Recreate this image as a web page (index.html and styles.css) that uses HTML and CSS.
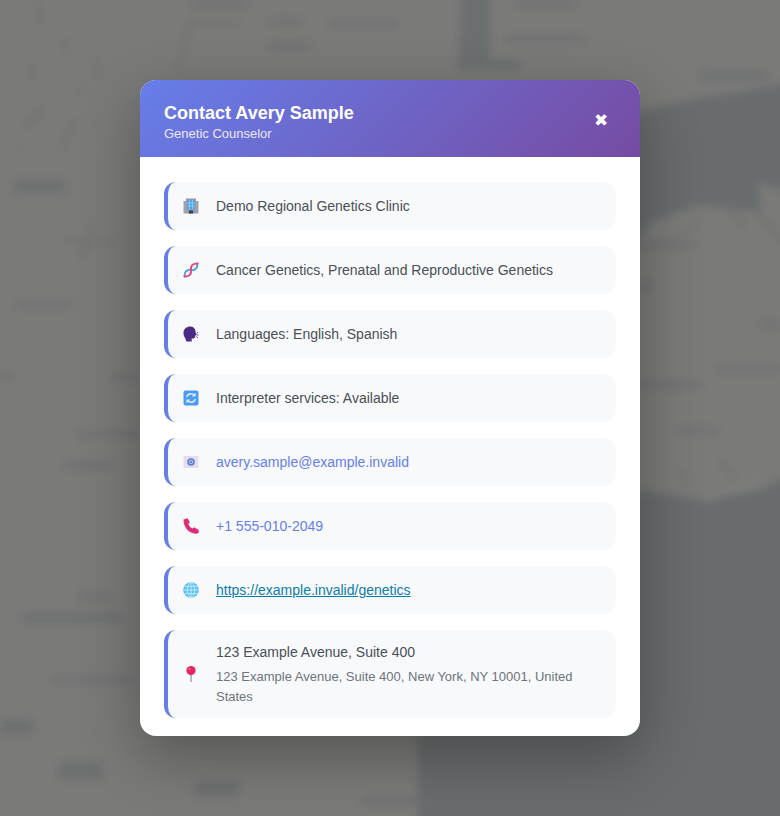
FILE: index.html
```html
<!DOCTYPE html>
<html lang="en">
<head>
  <meta charset="UTF-8">
  <title>Contact Avery Sample</title>
  <link rel="stylesheet" href="styles.css">
</head>
<body>
  <svg class="map" viewBox="0 0 780 816" preserveAspectRatio="none" aria-hidden="true">
    <g class="map-blur">
      <rect x="-20" y="-20" width="820" height="856" fill="#7a7a78"/>
      <!-- water -->
      <path d="M600 120 L690 100 L800 82 L800 195 L757 182 L762 212 L700 205 L650 222 L600 300 Z" fill="#686c6d"/>
      <path d="M800 470 L760 490 L700 500 L640 490 L418 736 L418 840 L800 840 Z" fill="#686c6d"/>
      <path d="M462 -20 H490 V60 H520 V70 H458 Z" fill="#6b6f6f"/>
      <!-- roads and small inlets -->
      <g fill="none" stroke="#707271" stroke-width="3" stroke-linecap="round">
        <path d="M25 128 L42 110 M60 150 L76 120 M38 5 L42 22 M64 38 L66 52 M30 65 L34 78 M96 60 L98 75 M78 95 L84 85 M18 148 L22 146"/>
        <path d="M62 240 L115 244 M95 222 L82 256"/>
        <path d="M190 22 H240 M190 24 L178 70"/>
        <path d="M680 235 L700 222 M752 205 L780 240 M722 205 L745 225"/>
        <path d="M680 470 L690 490 M720 460 L735 478"/>
      </g>
      <path d="M705 500 L760 482" stroke="#808280" stroke-width="4" fill="none"/>
      <!-- place labels -->
      <g fill="#6d6f70">
        <rect x="15" y="180" width="50" height="13"/>
        <rect x="16" y="303" width="56" height="5"/>
        <rect x="0" y="375" width="12" height="5"/>
        <rect x="112" y="375" width="28" height="5"/>
        <rect x="78" y="432" width="62" height="5"/>
        <rect x="64" y="462" width="46" height="7"/>
        <rect x="78" y="594" width="34" height="6"/>
        <rect x="22" y="613" width="100" height="9"/>
        <rect x="53" y="677" width="80" height="6"/>
        <rect x="0" y="720" width="34" height="14"/>
        <rect x="59" y="762" width="44" height="18"/>
        <rect x="195" y="780" width="44" height="16"/>
        <rect x="362" y="798" width="72" height="6"/>
        <rect x="190" y="0" width="60" height="6"/>
        <rect x="268" y="19" width="34" height="6"/>
        <rect x="268" y="43" width="42" height="7"/>
        <rect x="330" y="21" width="66" height="6"/>
        <rect x="516" y="0" width="62" height="6"/>
        <rect x="505" y="36" width="80" height="6"/>
        <rect x="700" y="72" width="68" height="8"/>
        <rect x="640" y="242" width="54" height="6"/>
        <rect x="640" y="282" width="12" height="8"/>
        <rect x="760" y="322" width="20" height="6"/>
        <rect x="718" y="367" width="62" height="5"/>
        <rect x="640" y="382" width="62" height="6"/>
        <rect x="678" y="428" width="40" height="6"/>
      </g>
    </g>
  </svg>

  <main class="modal">
    <header class="modal-head">
      <div>
        <h1 class="modal-title">Contact Avery Sample</h1>
        <p class="modal-sub">Genetic Counselor</p>
      </div>
      <button class="close-btn" type="button">✖</button>
    </header>

    <div class="modal-body">
      <div class="row">
        <svg class="icon" viewBox="0 0 16 16">
          <rect x="3" y="0.5" width="10" height="15" fill="#8e9bb0"/>
          <rect x="0.5" y="3" width="3" height="12.5" fill="#a3a1ac"/>
          <rect x="12.5" y="3" width="3" height="12.5" fill="#a3a1ac"/>
          <rect x="4.5" y="2" width="7" height="9.5" fill="#4aa8ea"/>
          <path d="M6.5 2v9.5M9.5 2v9.5M4.5 5h7M4.5 8h7" stroke="#9ed4f5" stroke-width=".7"/>
          <rect x="6" y="12.5" width="4" height="3" fill="#3e3a48"/>
        </svg>
        <span class="row-text">Demo Regional Genetics Clinic</span>
      </div>

      <div class="row">
        <svg class="icon" viewBox="0 0 16 16" fill="none" stroke-linecap="round">
          <path d="M3.5 8.5l4 4M5.5 6.5l1.5 1.5M9 8l1.5 1.5M8.5 3.5l4 4" stroke="#b4d8f2" stroke-width="1"/>
          <path d="M1.5 14.5 C1.5 10 3 7.5 8 8 C13 8.5 14.5 6 14.5 1.5" stroke="#3f9fe6" stroke-width="1.8"/>
          <path d="M1.5 14.5 C6 14.5 8.5 13 8 8 C7.5 3 10 1.5 14.5 1.5" stroke="#e4457a" stroke-width="1.9"/>
        </svg>
        <span class="row-text">Cancer Genetics, Prenatal and Reproductive Genetics</span>
      </div>

      <div class="row">
        <svg class="icon" viewBox="0 0 16 16">
          <path d="M0.5 7 C0.5 2.5 4 .3 7.6 .5 C11 .7 12.8 3.5 12.5 6.3 L13.6 9 L12.2 9.6 C12.4 11.8 11.4 12.8 9.6 12.6 L8.6 12.5 L8.8 15.6 L3.2 15.6 C3.4 12.8 0.5 11 0.5 7 Z" fill="#4b2a86"/>
          <path d="M14 6.5h1M14 9h1.5M14 11.5h1M13.2 8h.6M13.2 10.4h.6" stroke="#6a4aa6" stroke-width="1"/>
        </svg>
        <span class="row-text">Languages: English, Spanish</span>
      </div>

      <div class="row">
        <svg class="icon" viewBox="0 0 16 16" fill="none">
          <rect x="0.5" y="0.5" width="15" height="15" rx="2" fill="#4a9cf0"/>
          <path d="M3.6 7 A4.5 4.5 0 0 1 11.4 5.4" stroke="#dcecfb" stroke-width="1.6"/>
          <path d="M12.4 9 A4.5 4.5 0 0 1 4.6 10.6" stroke="#dcecfb" stroke-width="1.6"/>
          <path d="M12.6 2.8 V6.6 H8.8 Z M3.4 13.2 V9.4 H7.2 Z" fill="#dcecfb"/>
        </svg>
        <span class="row-text">Interpreter services: Available</span>
      </div>

      <div class="row">
        <svg class="icon" viewBox="0 0 16 16">
          <rect x="0.5" y="2" width="15" height="12" fill="#e6dcec"/>
          <circle cx="8" cy="8" r="3.8" fill="#5b7fd0"/>
          <circle cx="8" cy="8" r="1.7" fill="none" stroke="#c4d0ee" stroke-width=".9"/>
        </svg>
        <a class="row-text row-link" href="mailto:avery.sample@example.invalid">avery.sample@example.invalid</a>
      </div>

      <div class="row">
        <svg class="icon" viewBox="0 0 16 16">
          <path d="M0.6 1.6 L4.6 .2 L6.8 4.6 L5.4 6 C6 8 7.6 9.6 9.6 10.4 L11.2 9.2 L15.8 12 L15.6 15 C13.6 16 10.6 15.8 8 14.6 C3.6 12.6 .2 7 0.6 1.6 Z" fill="#dd2f78"/>
        </svg>
        <a class="row-text row-link" href="tel:+15550102049">+1 555-010-2049</a>
      </div>

      <div class="row">
        <svg class="icon" viewBox="0 0 16 16" fill="none">
          <circle cx="8" cy="8" r="7.8" fill="#5cc2f4"/>
          <g stroke="#d8f1fc" stroke-width=".8">
            <ellipse cx="8" cy="8" rx="3.6" ry="7.4"/>
            <path d="M8 .5v15M.6 8h14.8M1.6 4.4h12.8M1.6 11.6h12.8"/>
          </g>
        </svg>
        <a class="row-text row-url" href="https://example.invalid/genetics">https://example.invalid/genetics</a>
      </div>

      <div class="row">
        <svg class="icon" viewBox="0 0 16 16">
          <rect x="7.4" y="7" width="1.3" height="9" fill="#9a9aa2"/>
          <circle cx="8" cy="4.6" r="4.6" fill="#e6245f"/>
          <circle cx="6.6" cy="3" r="1.1" fill="#f57ca0"/>
        </svg>
        <div class="row-text">
          <div>123 Example Avenue, Suite 400</div>
          <div class="row-note">123 Example Avenue, Suite 400, New York, NY 10001, United States</div>
        </div>
      </div>
    </div>
  </main>
</body>
</html>
```

FILE: styles.css
```css
html, body {
  margin: 0;
  padding: 0;
  height: 100%;
  overflow: hidden;
}

body {
  display: flex;
  align-items: center;
  justify-content: center;
  background-color: #7a7a78;
  font-family: "Liberation Sans", Arial, sans-serif;
}

.map {
  position: absolute;
  top: 0;
  left: 0;
  width: 100%;
  height: 100%;
}

.map-blur {
  filter: blur(4px);
}

.modal {
  position: relative;
  width: 500px;
  border-radius: 16px;
  background-color: #fff;
  box-shadow: 0 20px 60px rgba(0, 0, 0, 0.3);
}

.modal-head {
  display: flex;
  align-items: center;
  justify-content: space-between;
  padding: 22px 24px 14px;
  border-radius: 16px 16px 0 0;
  color: #fff;
  background: linear-gradient(135deg, #667eea 0%, #764ba2 100%);
}

.modal-title {
  margin: 0;
  font-size: 18px;
  line-height: 22px;
  font-weight: 700;
}

.modal-sub {
  margin: 1px 0 0;
  font-size: 13px;
  line-height: 18px;
  color: #eee7f8;
}

.close-btn {
  width: 30px;
  height: 30px;
  margin-top: -6px;
  padding: 0;
  border: none;
  background: none;
  color: #fff;
  font-family: "DejaVu Sans", sans-serif;
  font-size: 17px;
  cursor: pointer;
}

.modal-body {
  display: flex;
  flex-direction: column;
  gap: 16px;
  padding: 25px 24px 18px;
}

.row {
  display: flex;
  align-items: center;
  gap: 17px;
  min-height: 24px;
  padding: 12px 16px 12px 15px;
  border-left: 4px solid #667eea;
  border-radius: 12px;
  background-color: #f8f9fa;
}

.icon {
  flex: none;
  width: 16px;
  height: 16px;
}

.row-text {
  color: #495057;
  font-size: 14px;
  line-height: 20px;
}

.row-link {
  color: #667eea;
  text-decoration: none;
}

.row-url {
  color: #0b7dab;
}

.row-note {
  margin: 5px 0 -1px;
  color: #6c757d;
  font-size: 13px;
}
```
